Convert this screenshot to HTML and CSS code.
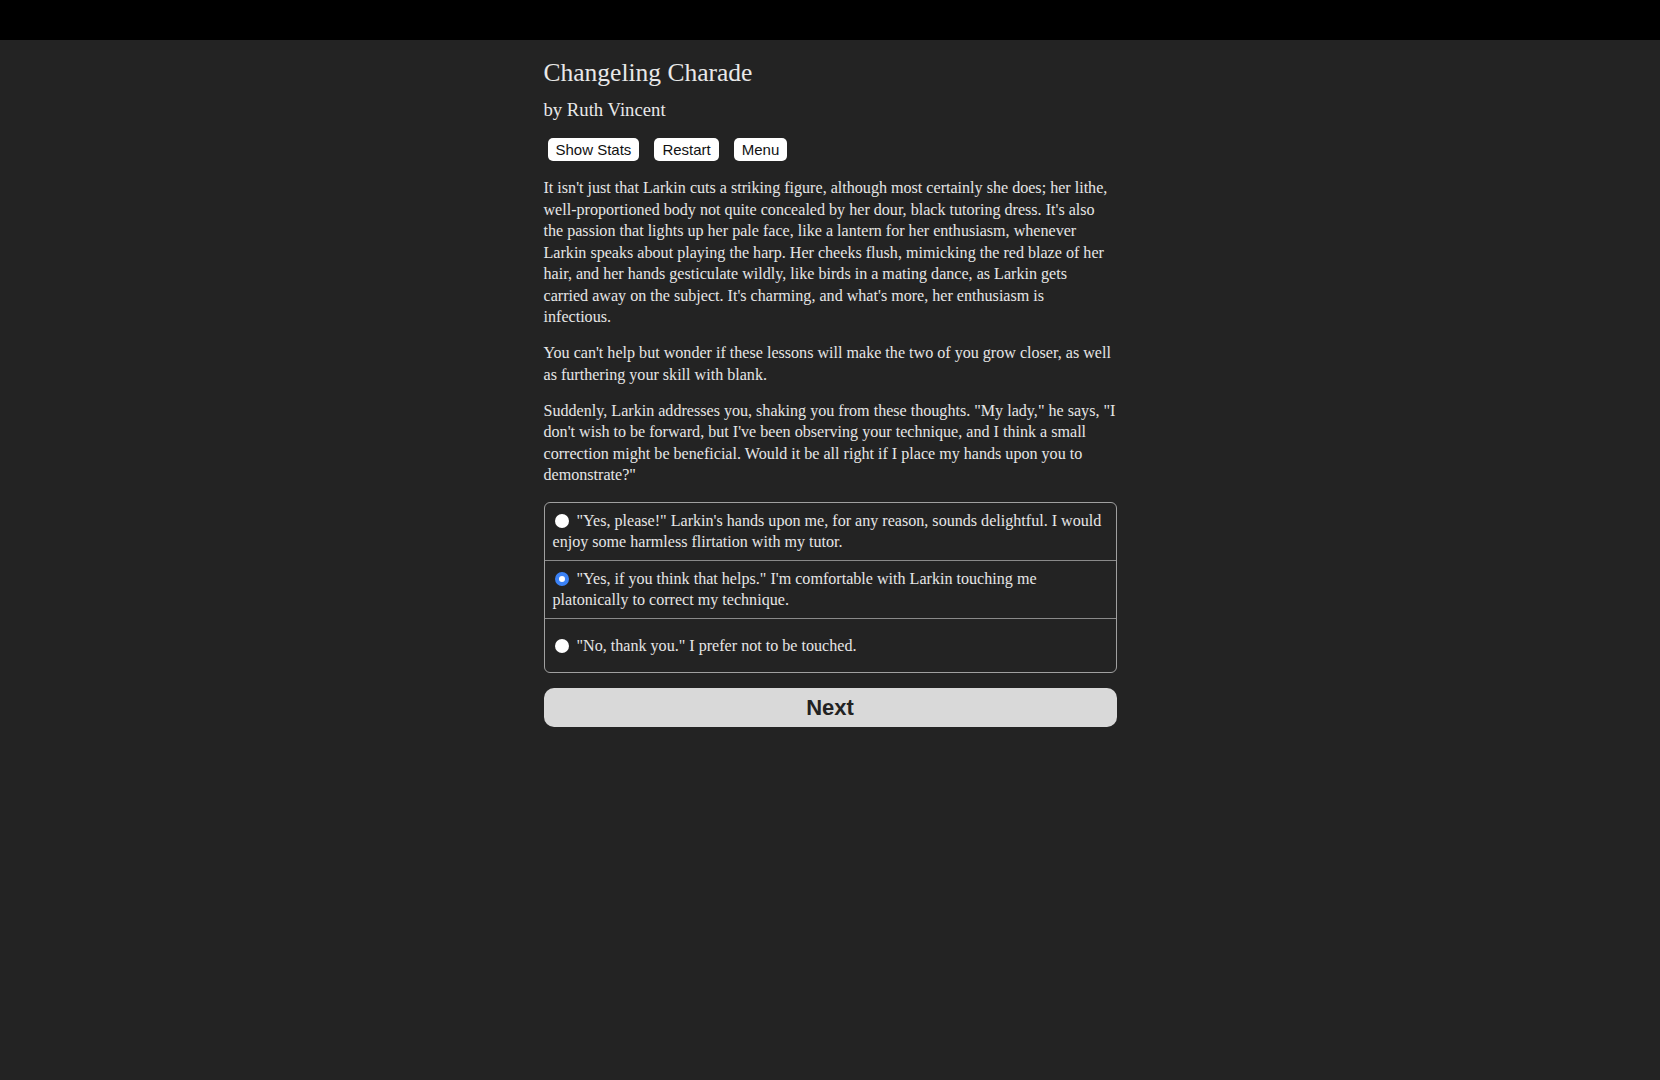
FILE: index.html
```html
<!DOCTYPE html>
<html lang="en">
<head>
<meta charset="utf-8">
<title>Changeling Charade</title>
<link rel="stylesheet" href="styles.css">
</head>
<body>
<div class="topbar"></div>
<main class="container">
  <h1 class="title">Changeling Charade</h1>
  <h2 class="byline">by Ruth Vincent</h2>
  <div class="buttons">
    <button class="small-btn">Show Stats</button>
    <button class="small-btn">Restart</button>
    <button class="small-btn">Menu</button>
  </div>
  <div class="text">
    <p>It isn't just that Larkin cuts a striking figure, although most certainly she does; her lithe,<br>well-proportioned body not quite concealed by her dour, black tutoring dress. It's also<br>the passion that lights up her pale face, like a lantern for her enthusiasm, whenever<br>Larkin speaks about playing the harp. Her cheeks flush, mimicking the red blaze of her<br>hair, and her hands gesticulate wildly, like birds in a mating dance, as Larkin gets<br>carried away on the subject. It's charming, and what's more, her enthusiasm is<br>infectious.</p>
    <p>You can't help but wonder if these lessons will make the two of you grow closer, as well<br>as furthering your skill with blank.</p>
    <p>Suddenly, Larkin addresses you, shaking you from these thoughts. "My lady," he says, "I<br>don't wish to be forward, but I've been observing your technique, and I think a small<br>correction might be beneficial. Would it be all right if I place my hands upon you to<br>demonstrate?"</p>
  </div>
  <form class="choices">
    <label class="choice"><span class="radio"></span>"Yes, please!" Larkin's hands upon me, for any reason, sounds delightful. I would<br>enjoy some harmless flirtation with my tutor.</label>
    <label class="choice"><span class="radio checked"></span>"Yes, if you think that helps." I'm comfortable with Larkin touching me<br>platonically to correct my technique.</label>
    <label class="choice last"><span class="radio"></span>"No, thank you." I prefer not to be touched.</label>
  </form>
  <button class="next">Next</button>
</main>
</body>
</html>
```
FILE: styles.css
```css
html, body {
  margin: 0;
  padding: 0;
  background: #232323;
}
body {
  font-family: "Liberation Serif", "Times New Roman", serif;
  color: #e6e6e6;
  min-height: 1080px;
}
.topbar {
  height: 40px;
  background: #000;
}
.container {
  width: 573px;
  margin: 0 auto;
}
.title {
  font-size: 25.5px;
  font-weight: normal;
  line-height: 32px;
  margin: 17px 0 0 0;
  color: #e8e8e8;
}
.byline {
  font-size: 18.7px;
  font-weight: normal;
  line-height: 26px;
  margin: 8px 0 0 0;
  color: #e8e8e8;
}
.buttons {
  display: flex;
  gap: 15px;
  margin: 15px 0 0 4px;
}
.small-btn {
  font-family: "Liberation Sans", Arial, sans-serif;
  font-size: 15px;
  line-height: 19px;
  height: 23px;
  padding: 1px 8px;
  background: #fff;
  color: #111;
  border: none;
  border-radius: 5px;
}
.text {
  margin-top: 16px;
  font-size: 16.1px;
  line-height: 21.5px;
}
.text p {
  margin: 0 0 14.5px 0;
  white-space: nowrap;
}
.text p:last-child {
  margin-bottom: 0;
}
.choices {
  margin-top: 16px;
  border: 1px solid #a0a0a0;
  border-radius: 6px;
  font-size: 16.1px;
  line-height: 21.5px;
}
.choice {
  display: block;
  padding: 7px 8px;
  border-top: 1px solid #8a8a8a;
  white-space: nowrap;
}
.choice:first-child {
  border-top: none;
}
.choice.last {
  padding: 16px 8px 16px 8px;
}
.radio {
  display: inline-block;
  width: 14px;
  height: 14px;
  border-radius: 50%;
  background: #fff;
  margin: 0 8px 0 2px;
  vertical-align: -2px;
  box-sizing: border-box;
}
.radio.checked {
  background: #fff;
  border: 4px solid #3b82f6;
}
.next {
  display: block;
  width: 100%;
  height: 39px;
  margin-top: 15px;
  background: #d9d9d9;
  color: #222;
  border: none;
  border-radius: 10px;
  font-family: "Liberation Sans", Arial, sans-serif;
  font-weight: bold;
  font-size: 22px;
}
```
